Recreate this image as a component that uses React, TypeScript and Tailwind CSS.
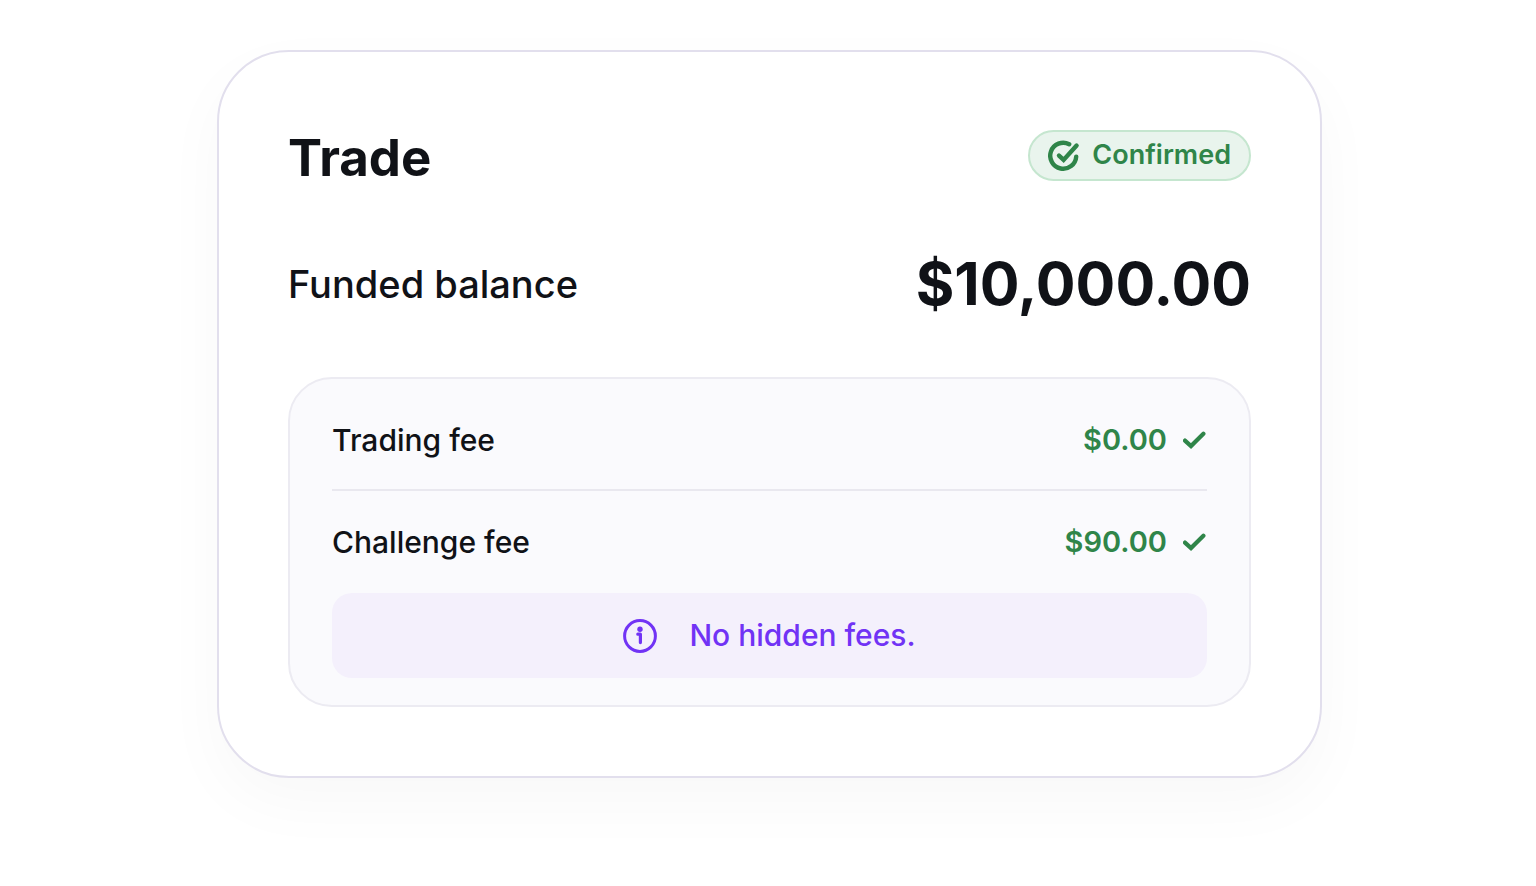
interface FeeRowProps {
  label: string;
  amount: string;
}

function CheckIcon() {
  return (
    <svg className="h-6 w-6" viewBox="0 0 24 24" fill="none" aria-hidden="true">
      <path d="M2 12.6 L8 18 L20.4 5.8" stroke="currentColor" strokeWidth="4.2" strokeLinecap="round" />
    </svg>
  );
}

function ConfirmedIcon() {
  return (
    <svg className="h-8 w-8" viewBox="0 0 32 32" fill="none" aria-hidden="true">
      <g stroke="currentColor" strokeWidth="4.4" strokeLinecap="round">
        <path d="M21.2 4.2 A13 13 0 1 0 28.2 16.6" />
        <path d="M11 15.6 L15.6 19.9 L28.6 5.6" />
      </g>
    </svg>
  );
}

function InfoIcon() {
  return (
    <svg className="h-[34px] w-[34px]" viewBox="0 0 34 34" fill="none" aria-hidden="true">
      <circle cx="17" cy="17" r="15.4" stroke="currentColor" strokeWidth="3" />
      <circle cx="17" cy="10.2" r="2.7" fill="currentColor" />
      <path d="M14.8 15.2 H17.4 V23.6" stroke="currentColor" strokeWidth="3.2" strokeLinecap="round" strokeLinejoin="round" />
    </svg>
  );
}

function FeeRow({ label, amount }: FeeRowProps) {
  return (
    <div className="flex items-center justify-between text-[30px] leading-10">
      <dt className="font-medium">{label}</dt>
      <dd className="flex items-center gap-4 text-[29px] font-semibold text-[#2f8549]">
        {amount}
        <CheckIcon />
      </dd>
    </div>
  );
}

export default function App() {
  return (
    <main className="min-h-screen bg-white pt-[50px] pb-12 pl-[3px] font-['Inter',sans-serif] text-[#101217]">
      <section className="mx-auto max-w-[1105px] rounded-[72px] border-2 border-[#e2dfed] bg-white px-[69px] pt-[78px] pb-[69px] shadow-[0_24px_64px_rgba(0,0,0,0.03)]">
        {/* Header */}
        <div className="flex items-start justify-between">
          <h1 className="text-[51px] leading-14 font-bold">Trade</h1>
          <div className="flex h-[51px] items-center gap-3 rounded-full border-2 border-[#c5e6cf] bg-[#e9f4ed] px-[18px] text-[27px] font-semibold text-[#2f8549]">
            <ConfirmedIcon />
            Confirmed
          </div>
        </div>

        {/* Balance */}
        <div className="mt-[62px] flex items-center justify-between">
          <h2 className="text-[38px] leading-12 font-medium">Funded balance</h2>
          <p className="text-[59px] leading-[72px] font-bold">$10,000.00</p>
        </div>

        {/* Fees */}
        <div className="mt-[57px] rounded-[44px] border-2 border-[#ecebf2] bg-[#fafafd] px-[42px] pt-[41px] pb-[27px]">
          <dl>
            <FeeRow label="Trading fee" amount="$0.00" />
            <div className="mt-[29px] border-t-2 border-[#e9e8ef] pt-[31px]">
              <FeeRow label="Challenge fee" amount="$90.00" />
            </div>
          </dl>
          <div className="mt-[31px] flex h-[85px] items-center justify-center gap-8 rounded-[20px] bg-[#f4f0fc] text-[30px] font-medium text-[#7133f5]">
            <InfoIcon />
            <span>No hidden fees.</span>
          </div>
        </div>
      </section>
    </main>
  );
}
